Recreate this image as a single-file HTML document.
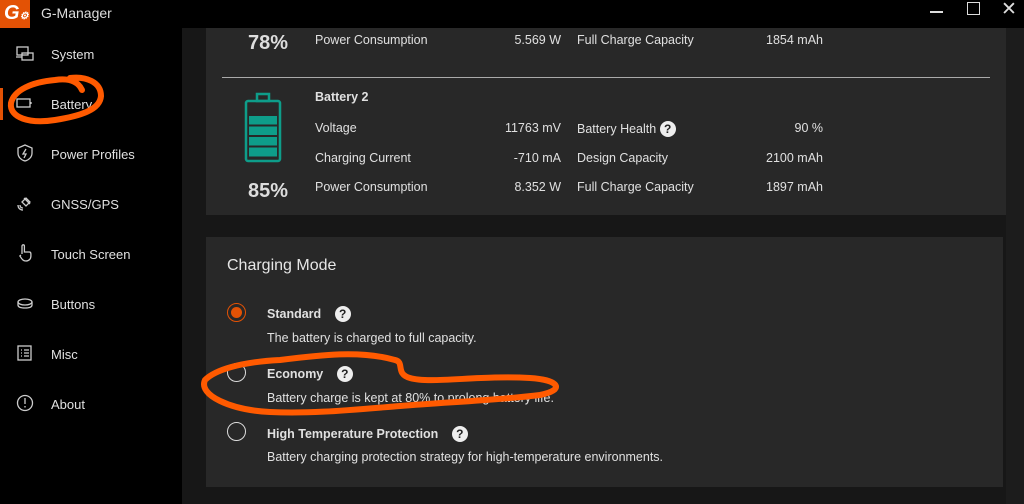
<!DOCTYPE html>
<html><head><meta charset="utf-8"><style>
*{margin:0;padding:0;box-sizing:border-box}
body{width:1024px;height:504px;background:#000;font-family:"Liberation Sans",sans-serif;color:#e6e6e6;position:relative;overflow:hidden;font-size:13px}
.abs{position:absolute}
.side{left:0;top:0;width:182px;height:504px;background:#000}
.main{left:182px;top:28px;width:842px;height:476px;background:#171717}
.sb{left:1006px;top:28px;width:18px;height:476px;background:#1c1c1c}
.p1{left:206px;top:28px;width:800px;height:187px;background:#282828}
.p2{left:206px;top:237px;width:797px;height:250px;background:#282828}
.nav{left:51px;font-size:13px;color:#e0e0e0}
.ic{left:15px;width:20px;height:20px}
.t{font-size:12.5px;color:#e0e0e0}
.r{text-align:right}
.q{display:inline-block;width:16px;height:16px;border-radius:50%;background:#eee;color:#222;font-weight:bold;font-size:12px;text-align:center;line-height:16px}
.rad{width:19px;height:19px;border-radius:50%;border:1.5px solid #ddd}
</style></head><body>
<div class="abs side"></div>
<div class="abs main"></div>
<div class="abs sb"></div>
<div class="abs" style="left:0;top:0;width:30px;height:28px;background:#e35205;color:#fff;font-weight:bold;font-size:20px;font-style:italic;padding-left:4px;line-height:27px">G<span style="font-size:10px">⚙</span></div>
<div class="abs" style="left:41px;top:5px;font-size:14px;color:#ddd">G-Manager</div>
<div class="abs" style="left:930px;top:11px;width:13px;height:1.5px;background:#ddd"></div>
<div class="abs" style="left:967px;top:2px;width:13px;height:13px;border:1.5px solid #ddd"></div>
<div class="abs" style="left:1001px;top:-2px;font-size:19px;color:#ddd">✕</div>
<div class="abs" style="left:0;top:88px;width:3px;height:32px;background:#e35205"></div>
<svg class="abs ic" style="top:44px" viewBox="0 0 20 20" fill="none" stroke="#ccc" stroke-width="1.3"><rect x="2" y="3" width="11" height="8"/><rect x="7" y="9" width="11" height="7"/><path d="M1 13h6"/></svg>
<div class="abs nav" style="top:47px">System</div>
<svg class="abs ic" style="top:93px" viewBox="0 0 20 20" fill="none" stroke="#ccc" stroke-width="1.3"><rect x="2" y="6" width="13" height="8"/><path d="M16 9v2"/></svg>
<div class="abs nav" style="top:97px">Battery</div>
<svg class="abs ic" style="top:143px" viewBox="0 0 20 20" fill="none" stroke="#ccc" stroke-width="1.3"><path d="M10 2l7 3v5c0 4-3 7-7 8-4-1-7-4-7-8V5z"/><path d="M11 6l-3 5h3l-2 4" /></svg>
<div class="abs nav" style="top:147px">Power Profiles</div>
<svg class="abs ic" style="top:193px" viewBox="0 0 20 20" fill="none" stroke="#ccc" stroke-width="1.3"><path d="M9 5l6 6M7 9l4-4 4 4-4 4zM3 12c0 3 2 5 5 5M5 12c0 2 1 3 3 3"/></svg>
<div class="abs nav" style="top:197px">GNSS/GPS</div>
<svg class="abs ic" style="top:243px" viewBox="0 0 20 20" fill="none" stroke="#ccc" stroke-width="1.3"><path d="M7 11V3a1.2 1.2 0 012.4 0v6h5c1 0 1.5 1 1.5 2v2c0 3-2 5-5 5s-4-2-6-5l1-1"/></svg>
<div class="abs nav" style="top:247px">Touch Screen</div>
<svg class="abs ic" style="top:293px" viewBox="0 0 20 20" fill="none" stroke="#ccc" stroke-width="1.3"><ellipse cx="10" cy="9" rx="7" ry="3"/><path d="M3 9v3c0 2 3 3 7 3s7-1 7-3V9"/></svg>
<div class="abs nav" style="top:297px">Buttons</div>
<svg class="abs ic" style="top:343px" viewBox="0 0 20 20" fill="none" stroke="#ccc" stroke-width="1.3"><rect x="3" y="3" width="13" height="14"/><path d="M6 7h1M9 7h5M6 10h1M9 10h5M6 13h1M9 13h5"/></svg>
<div class="abs nav" style="top:347px">Misc</div>
<svg class="abs ic" style="top:393px" viewBox="0 0 20 20" fill="none" stroke="#ccc" stroke-width="1.3"><circle cx="10" cy="10" r="7.5"/><path d="M10 5v6M10 13v1.5"/></svg>
<div class="abs nav" style="top:397px">About</div>
<div class="abs p1"></div>
<div class="abs" style="left:248px;top:32px;font-size:20px;font-weight:bold;color:#ddd">78%</div>
<div class="abs t" style="left:315px;top:33px">Power Consumption</div>
<div class="abs t r" style="left:480px;width:81px;top:33px">5.569 W</div>
<div class="abs t" style="left:577px;top:33px">Full Charge Capacity</div>
<div class="abs t r" style="left:740px;width:83px;top:33px">1854 mAh</div>
<div class="abs" style="left:222px;top:77px;width:768px;height:1px;background:#aaa"></div>
<svg class="abs" style="left:244px;top:92px" width="38" height="71" viewBox="0 0 38 71" fill="none" stroke="#0e9d8a" stroke-width="2.5"><rect x="13" y="2" width="12" height="7"/><rect x="2" y="9" width="34" height="60" rx="2"/><g fill="#0e9d8a" stroke="none"><rect x="5" y="24" width="28" height="8.5"/><rect x="5" y="34.5" width="28" height="8.5"/><rect x="5" y="45" width="28" height="8.5"/><rect x="5" y="55.5" width="28" height="9"/></g></svg>
<div class="abs" style="left:248px;top:180px;font-size:20px;font-weight:bold;color:#ddd">85%</div>
<div class="abs t" style="left:315px;top:90px;font-weight:bold">Battery 2</div>
<div class="abs t" style="left:315px;top:121px">Voltage</div>
<div class="abs t" style="left:315px;top:151px">Charging Current</div>
<div class="abs t" style="left:315px;top:180px">Power Consumption</div>
<div class="abs t r" style="left:460px;width:101px;top:121px">11763 mV</div>
<div class="abs t r" style="left:460px;width:101px;top:151px">-710 mA</div>
<div class="abs t r" style="left:460px;width:101px;top:180px">8.352 W</div>
<div class="abs t" style="left:577px;top:121px">Battery Health <span class="q">?</span></div>
<div class="abs t" style="left:577px;top:151px">Design Capacity</div>
<div class="abs t" style="left:577px;top:180px">Full Charge Capacity</div>
<div class="abs t r" style="left:740px;width:83px;top:121px">90 %</div>
<div class="abs t r" style="left:740px;width:83px;top:151px">2100 mAh</div>
<div class="abs t r" style="left:740px;width:83px;top:180px">1897 mAh</div>
<div class="abs p2"></div>
<div class="abs" style="left:227px;top:257px;font-size:16px;color:#e6e6e6">Charging Mode</div>
<div class="abs rad" style="left:227px;top:303px;border-color:#e35205"><div style="margin:2.5px;width:11px;height:11px;border-radius:50%;background:#e35205"></div></div>
<div class="abs t" style="left:267px;top:306px;font-weight:bold">Standard <span class="q" style="margin-left:10px">?</span></div>
<div class="abs t" style="left:267px;top:331px">The battery is charged to full capacity.</div>
<div class="abs rad" style="left:227px;top:363px"></div>
<div class="abs t" style="left:267px;top:366px;font-weight:bold">Economy <span class="q" style="margin-left:10px">?</span></div>
<div class="abs t" style="left:267px;top:391px">Battery charge is kept at 80% to prolong battery life.</div>
<div class="abs rad" style="left:227px;top:422px"></div>
<div class="abs t" style="left:267px;top:426px;font-weight:bold">High Temperature Protection <span class="q" style="margin-left:10px">?</span></div>
<div class="abs t" style="left:267px;top:450px">Battery charging protection strategy for high-temperature environments.</div>
<svg class="abs" style="left:0;top:0" width="1024" height="504" fill="none" stroke="#ff5a00" stroke-width="6" stroke-linecap="round">
<path d="M82 90C78 81 68 78 55 80C32 82 14 90 11 103C9 118 30 124 55 120C80 116 100 110 101 96C101 82 86 76 70 78"/>
<path d="M395 360C360 350 320 355 280 360C240 362 215 370 205 380C198 395 230 410 270 412C310 414 350 410 400 406C450 402 500 400 540 395C565 390 560 380 530 378C480 375 430 384 410 378C395 374 405 362 395 360"/>
</svg>
</body></html>
